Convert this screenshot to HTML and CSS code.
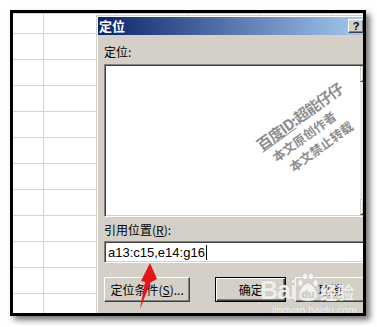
FILE: index.html
```html
<!DOCTYPE html>
<html>
<head>
    <title>定位</title>
    <link rel="stylesheet" href="styles.css">
</head>
<body>
    <div class="frame">
        <!-- spreadsheet behind the dialog -->
        <div class="sheet"></div>

        <div class="dialog">
            <div class="title-bar">
                <span class="title-text">定位</span>
                <span class="help-btn">?</span>
            </div>
            <div class="dialog-body">
                <div class="label">定位:</div>
                <div class="listbox">
                    <div class="scrollbar">
                        <span class="scroll-btn"></span>
                        <span class="scroll-btn"></span>
                    </div>
                </div>
                <div class="label ref-label">引用位置(<u>R</u>):</div>
                <div class="ref-input">a13:c15,e14:g16<span class="caret"></span></div>
                <div class="button-row">
                    <button class="win-btn special-btn">定位条件(<u>S</u>)...</button>
                    <button class="win-btn default-btn ok-btn">确定</button>
                    <button class="win-btn cancel-btn">取消</button>
                </div>
            </div>
        </div>

        <!-- watermark over the list box -->
        <div class="stamp">
            <div class="stamp-line stamp-big"><u>百度ID</u>:超能仔仔</div>
            <div class="stamp-line stamp-mid">本文原创作者</div>
            <div class="stamp-line">本文禁止转载</div>
        </div>

        <div class="baidu-logo">
            <div class="logo-row">
                <span class="logo-bai">Bai</span>
                <svg class="logo-paw" width="22" height="30" viewBox="0 0 22 30">
                    <ellipse cx="3.5" cy="11" rx="2.6" ry="3.4"/>
                    <ellipse cx="8" cy="4.5" rx="2.6" ry="3.4"/>
                    <ellipse cx="14" cy="4.5" rx="2.6" ry="3.4"/>
                    <ellipse cx="18.5" cy="11" rx="2.6" ry="3.4"/>
                    <path d="M11 11 C7 11 3 17 2 22 C1 27 5 29 11 29 C17 29 21 27 20 22 C19 17 15 11 11 11 Z"/>
                    <text x="11" y="26" text-anchor="middle" class="paw-du">du</text>
                </svg>
                <span class="logo-jy">经验</span>
            </div>
            <div class="logo-url">jingyan.baidu.com</div>
        </div>

        <svg class="arrow" width="40" height="60" viewBox="0 0 40 60">
            <polygon points="12,5 19,21 12.5,24.5 2,51 7,24 3,23"/>
        </svg>
    </div>
</body>
</html>
```

FILE: styles.css
```css
body {
    margin: 0;
    padding: 10px;
    background: #fff;
    font-family: "Noto Sans CJK SC", "Noto Sans", sans-serif;
}

.frame {
    position: relative;
    width: 350px;
    height: 300px;
    border: 3px solid #000;
    overflow: hidden;
    box-shadow: 4px 4px 6px rgba(0, 0, 0, 0.55);
}

.sheet {
    height: 100%;
    border-top: 1px solid #d4d4d4;
    background-color: #fff;
    background-image:
        linear-gradient(to right, #d4d4d4 1px, transparent 1px),
        linear-gradient(to bottom, #d4d4d4 1px, transparent 1px);
    background-size: 72px 100%, 100% 26px;
    background-position: 30px 0, 0 19px;
}

/* the Go To window sits over the sheet */
.dialog {
    position: absolute;
    left: 83px;
    top: 2px;
    width: 268px;
    height: 320px;
    background: #d4d0c8;
    border-top: 1px solid #d4d0c8;
    border-left: 1px solid #d4d0c8;
    box-shadow: inset 1px 1px #fff;
    padding: 1px 0 0 1px;
}

.title-bar {
    display: flex;
    justify-content: space-between;
    align-items: center;
    height: 18px;
    padding: 0 2px 0 1px;
    background: linear-gradient(to right, #0a246a, #a6caf0);
}

.title-text {
    color: #fff;
    font-weight: bold;
    font-size: 13px;
    line-height: 18px;
}

.help-btn {
    width: 16px;
    height: 14px;
    box-sizing: border-box;
    background: #d4d0c8;
    border: 1px solid;
    border-color: #fff #404040 #404040 #fff;
    box-shadow: inset -1px -1px #808080;
    font-family: "Liberation Sans", sans-serif;
    font-weight: bold;
    font-size: 11px;
    line-height: 12px;
    text-align: center;
    color: #000;
}

.dialog-body {
    padding: 9px 0 0 6px;
}

.label {
    font-size: 12px;
    line-height: 16px;
    color: #000;
}

.listbox {
    display: flex;
    justify-content: flex-end;
    width: 274px;
    height: 153px;
    margin-top: 4px;
    box-sizing: border-box;
    background: #fff;
    border: 1px solid;
    border-color: #808080 #fff #fff #808080;
    box-shadow: inset 1px 1px #404040, inset -1px -1px #d4d0c8;
    padding: 1px;
}

.scrollbar {
    display: flex;
    flex-direction: column;
    justify-content: space-between;
    width: 16px;
    background: #ebe9e5;
}

.scroll-btn {
    height: 16px;
    box-sizing: border-box;
    background: #d4d0c8;
    border: 1px solid;
    border-color: #d4d0c8 #404040 #404040 #d4d0c8;
    box-shadow: inset 1px 1px #fff, inset -1px -1px #808080;
}

.ref-label {
    margin-top: 5px;
}

.ref-input {
    display: flex;
    align-items: center;
    width: 274px;
    height: 22px;
    margin-top: 3px;
    box-sizing: border-box;
    padding-left: 3px;
    background: #fff;
    border: 1px solid;
    border-color: #808080 #fff #fff #808080;
    box-shadow: inset 1px 1px #404040, inset -1px -1px #d4d0c8;
    font-family: "Liberation Sans", sans-serif;
    font-size: 13px;
    color: #000;
}

.caret {
    width: 1px;
    height: 15px;
    margin-left: 1px;
    background: #000;
}

.button-row {
    display: flex;
    margin-top: 14px;
}

.win-btn {
    height: 25px;
    padding: 0;
    box-sizing: border-box;
    background: #d4d0c8;
    border: 1px solid;
    border-color: #fff #404040 #404040 #fff;
    box-shadow: inset -1px -1px #808080;
    font-family: inherit;
    font-size: 12px;
    color: #000;
}

.special-btn {
    width: 90px;
}

.ok-btn {
    width: 74px;
    margin-left: 25px;
}

.cancel-btn {
    width: 74px;
    margin-left: 9px;
}

.default-btn {
    border-color: #000;
    box-shadow: inset 1px 1px #fff, inset -1px -1px #404040, inset -2px -2px #808080;
}

/* grey stamp printed over the picture */
.stamp {
    position: absolute;
    left: 229px;
    top: 90px;
    width: 136px;
    transform: rotate(-36deg);
    text-align: center;
    color: #8e8e8e;
    font-weight: bold;
    font-size: 12.5px;
    line-height: 18px;
    text-shadow: 0 0 1px #fff;
    white-space: nowrap;
}

.stamp-big {
    font-size: 15px;
    line-height: 20px;
    letter-spacing: -1px;
}

.stamp-mid {
    padding-right: 16px;
}

.baidu-logo {
    position: absolute;
    left: 247px;
    top: 257px;
    color: rgba(255, 255, 255, 0.8);
    text-shadow: 0 0 1px #b4b4b4;
}

.logo-row {
    display: flex;
    align-items: flex-end;
    height: 33px;
}

.logo-bai {
    font-family: "Liberation Sans", sans-serif;
    font-weight: bold;
    font-size: 25px;
    line-height: 25px;
    letter-spacing: -1px;
}

.logo-paw {
    margin: 0 1px 1px 1px;
    fill: rgba(255, 255, 255, 0.75);
    stroke: #c0c0c0;
    stroke-width: 0.6;
}

.paw-du {
    font-family: "Liberation Sans", sans-serif;
    font-weight: bold;
    font-size: 11px;
    fill: #cfcfcf;
    stroke: none;
}

.logo-jy {
    font-size: 17px;
    line-height: 22px;
    font-weight: bold;
}

.logo-url {
    margin-top: 2px;
    padding-left: 12px;
    font-family: "Liberation Sans", sans-serif;
    font-size: 10.5px;
    line-height: 11px;
    color: rgba(255, 255, 255, 0.85);
}

.arrow {
    position: absolute;
    left: 125px;
    top: 245px;
    fill: #e5141b;
}
```
